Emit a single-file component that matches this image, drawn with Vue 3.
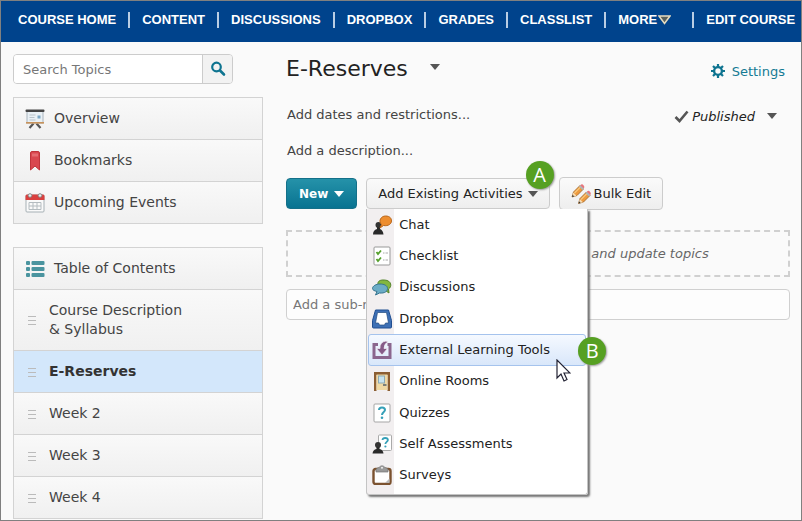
<script setup>
const navItems = ['COURSE HOME', 'CONTENT', 'DISCUSSIONS', 'DROPBOX', 'GRADES', 'CLASSLIST', 'MORE', 'EDIT COURSE']
const modules = ['Course Description & Syllabus', 'E-Reserves', 'Week 2', 'Week 3', 'Week 4']
const activities = ['Chat', 'Checklist', 'Discussions', 'Dropbox', 'External Learning Tools', 'Online Rooms', 'Quizzes', 'Self Assessments', 'Surveys']
</script>

<template>
  <div class="page">
    <nav class="topnav" aria-label="Course">
      <ul>
        <li v-for="item in navItems" :key="item" :class="{ more: item === 'MORE' }">
          <a href="#">{{ item }}<svg v-if="item === 'MORE'" width="13" height="10" viewBox="0 0 13 10"><path d="M1 1h11L6.500 8.500z" fill="#59605c" stroke="#e6dcc0" stroke-width="1.500" /></svg></a>
        </li>
      </ul>
    </nav>

    <div class="body">
      <aside class="sidebar">
        <form class="search" @submit.prevent>
          <input type="text" placeholder="Search Topics" aria-label="Search Topics" />
          <button type="submit" aria-label="Search">
            <svg width="16" height="16" viewBox="0 0 16 16" fill="none" stroke="#0e7490" stroke-linecap="round"><circle cx="6.500" cy="6" r="4.300" stroke-width="2.200" /><path d="M10 9.500l4 4" stroke-width="2.600" /></svg>
          </button>
        </form>

        <ul class="panel">
          <li>
            <a href="#" class="row">
              <svg width="20" height="20" viewBox="0 0 20 20"><path d="M4.500 19l4-4.500M15.500 19l-4-4.500" fill="none" stroke="#555" stroke-width="2.200" /><rect x="2" y="2.500" width="16" height="11.500" fill="#e9f0f5" stroke="#a8b4bd" /><path d="M4.500 6h6M4.500 8.500h5M4.500 11h6" stroke="#b9c3ca" /><rect x="12.500" y="6.500" width="3" height="3" fill="#7ba6c4" /><rect x="1" y="13" width="18" height="1.600" fill="#c8935b" /><rect x="0.500" y="0.500" width="19" height="2.500" rx="1" fill="#444" /></svg>
              Overview
            </a>
          </li>
          <li>
            <a href="#" class="row">
              <svg width="20" height="20" viewBox="0 0 20 20"><path d="M5.500 2q0-1.500 1.500-1.500h6q1.500 0 1.500 1.500v17L10 15l-4.500 4z" fill="#d9474f" stroke="#c0343b" /><path d="M7 2.500h6v3H7z" fill="#ea7c80" opacity=".7" /></svg>
              Bookmarks
            </a>
          </li>
          <li>
            <a href="#" class="row">
              <svg width="20" height="20" viewBox="0 0 20 20"><rect x="1" y="2" width="18" height="17" rx="1" fill="#fafafa" stroke="#a6b0b5" /><path d="M.5 7V3q0-1.500 1.500-1.500h16q1.500 0 1.500 1.500v4z" fill="#d9403f" /><path d="M4 9.500h12v7H4zM8 9.500v7M12 9.500v7M4 13h12" fill="none" stroke="#b5bcc0" /><circle cx="5" cy="2.500" r="1.800" fill="#eee" stroke="#888" /><circle cx="15" cy="2.500" r="1.800" fill="#eee" stroke="#888" /></svg>
              Upcoming Events
            </a>
          </li>
        </ul>

        <ul class="panel toc">
          <li>
            <a href="#" class="row">
              <svg width="20" height="20" viewBox="0 0 20 20" fill="#4a949f"><rect x="1" y="2" width="4" height="4" rx="1" /><rect x="6.500" y="2" width="13" height="4" rx="1" /><rect x="1" y="8" width="4" height="4" rx="1" /><rect x="6.500" y="8" width="13" height="4" rx="1" /><rect x="1" y="14" width="4" height="4" rx="1" /><rect x="6.500" y="14" width="13" height="4" rx="1" /></svg>
              Table of Contents
            </a>
          </li>
          <li v-for="name in modules" :key="name">
            <a href="#" class="row module" :class="{ current: name === 'E-Reserves' }">
              <svg width="8" height="10" viewBox="0 0 8 10"><path d="M0 1.500h8M0 5.500h8M0 9.500h8" stroke="#bbb" /></svg>
              <span>{{ name }}</span>
            </a>
          </li>
        </ul>
      </aside>

      <main class="content">
        <header class="titlebar">
          <h1>E-Reserves</h1>
          <button class="plain" aria-label="Module actions"><i class="caret"></i></button>
          <a href="#" class="settings">
            <svg width="16" height="16" viewBox="0 0 16 16" fill="none" stroke="#0e7490"><circle cx="8" cy="8" r="3.900" stroke-width="2.400" /><path d="M8 1v3M8 12v3M1 8h3M12 8h3M3 3l2 2M11 11l2 2M13 3l-2 2M5 11l-2 2" stroke-width="2.200" /></svg>
            Settings
          </a>
        </header>

        <div class="line">
          <a href="#">Add dates and restrictions...</a>
          <button class="plain status">
            <svg width="15" height="13" viewBox="0 0 15 13"><path d="M1.500 7l4 4L13.500 1.500" fill="none" stroke="#555" stroke-width="2.600" /></svg>
            <em>Published</em>
            <i class="caret"></i>
          </button>
        </div>
        <div class="line"><a href="#">Add a description...</a></div>

        <div class="toolbar">
          <button class="btn primary">New <i class="caret"></i></button>
          <div class="dropdown">
            <button class="btn" aria-haspopup="true" aria-expanded="true">Add Existing Activities <i class="caret"></i></button>
            <span class="badge badge-a">A</span>
            <ul class="menu">
              <li v-for="name in activities" :key="name">
                <a href="#" :class="{ active: name === 'External Learning Tools' }">
                  <svg width="20" height="20" viewBox="0 0 20 20">
                    <g v-if="name === 'Chat'"><circle cx="6.500" cy="10" r="3" fill="#333" /><path d="M5 12h3v2q3 1 3.500 5.500H1Q1 15 5 14z" fill="#292929" /><path d="M8 13l1.500-3.500C6 6 9 1 13.500 1s6 2.500 6 5-3 5.500-8 4.500z" fill="#ed8d2f" stroke="#b8661b" /></g>
                    <g v-else-if="name === 'Checklist'"><rect x="2" y="1" width="16" height="18" rx="1" fill="#fff" stroke="#999" /><path d="M4.500 6l1.500 2L9 4.500M4.500 13l1.500 2 3-3.500" fill="none" stroke="#55a02c" stroke-width="1.800" /><path d="M11 7h1.500M13.500 7H16M11 14h1.500M13.500 14H16" stroke="#aaa" /></g>
                    <g v-else-if="name === 'Discussions'"><path d="M14 14l3 2-.5-4C20 10 20 3.500 12.500 3S5 7 7 10s5 3 7 4z" fill="#83b740" stroke="#538228" /><path d="M5 14.500L3.500 18l4-2c5 .5 8-1.500 8-4.500S12 7 8 7s-7.500 2-7.500 4.500c0 1.500 2 2.500 4.500 3z" fill="#6cacc6" stroke="#37748f" /></g>
                    <g v-else-if="name === 'Dropbox'"><path d="M3.500 1h13l3 10.500V18q0 1-1 1h-17q-1 0-1-1v-6.500z" fill="#3e70b5" stroke="#214f91" /><path d="M5.500 3.500h9L16.500 14h-3l-1 2h-5l-1-2h-3z" fill="#fff" stroke="#234a80" stroke-width=".7" /></g>
                    <g v-else-if="name === 'External Learning Tools'"><path d="M6 4.500H2V17.500h16V4.500H15.500" fill="none" stroke="#8b668e" stroke-width="3" /><path d="M14 1Q7.500 2 8 8.500H4.500L10 15l5.500-6.500H12q0-5 4-6.500z" fill="#865b88" stroke="#f4eff5" stroke-width=".7" /></g>
                    <g v-else-if="name === 'Online Rooms'"><path d="M2 20V1h16v19h-2.500V4h-11v16z" fill="#8b5e32" /><path d="M4.500 3.500h11V19h-11z" fill="#efd9a4" /><rect x="6.500" y="5" width="6" height="7" fill="#c6e3ef" stroke="#8ca9b4" /><path d="M11 14h3.500" stroke="#54606a" stroke-width="1.500" /></g>
                    <g v-else-if="name === 'Quizzes'"><rect x="2" y="1" width="16" height="18" rx="1" fill="#fff" stroke="#a5a5a5" /><path d="M7 7q0-2.500 3-2.500T13 7c0 2-3 2-3 5" fill="none" stroke="#35a0b8" stroke-width="2" /><circle cx="10" cy="14.800" r="1.300" fill="#35a0b8" /></g>
                    <g v-else-if="name === 'Self Assessments'"><rect x="6.500" y="1" width="13" height="15.500" rx="1" fill="#fff" stroke="#aaa" /><path d="M10.500 6q0-2 2.700-2t2.700 2c0 1.800-2.500 2-2.500 4" fill="none" stroke="#35a0b8" stroke-width="1.800" /><circle cx="13.400" cy="12.500" r="1.100" fill="#35a0b8" /><circle cx="6" cy="11" r="3" fill="#333" /><path d="M4.500 13h3v2q3.500.5 4 4.500H.5Q1 15.500 4.500 15z" fill="#292929" /></g>
                    <g v-else><rect x="1.500" y="4" width="17" height="15" rx="2" fill="#fff" stroke="#7b522f" stroke-width="2.400" /><path d="M13 18l4.500-4.500V18z" fill="#b9b9b9" /><path d="M4 7V4.500q1-2 3-2Q10-1 13 2.500q2 0 3 2V7z" fill="#999" stroke="#777" stroke-width=".7" /><circle cx="10" cy="2.800" r="1" fill="#eee" /></g>
                  </svg>
                  <span>{{ name }}</span>
                </a>
              </li>
            </ul>
            <span class="badge badge-b">B</span>
            <svg class="pointer" width="15" height="23" viewBox="0 0 15 23"><path d="M1 1v18l4-4 3 7 3-1.500-3-6.500h6z" fill="#fff" stroke="#223" stroke-width="1.200" /></svg>
          </div>
          <button class="btn bulk">
            <svg width="20" height="20" viewBox="0 0 20 20"><g id="pencil"><path d="M1 13l1.500-5L9 1.500l3.500 3.500L6 11.500z" fill="#ee9a3e" stroke="#9c6224" stroke-width=".8" /><path d="M1 13l1.300-4.500 3.200 3.200z" fill="#f6dcb4" /><path d="M1 13l.6-2.200 1.600 1.600z" fill="#333" /><path d="M3.500 9l6-6" stroke="#f7c77b" stroke-width="1.300" /><path d="M8 2.500L9.500 1l3.500 3.500L11.500 6z" fill="#aeb7ba" /><path d="M9.300 1.200q1.700-1.700 3.200 0t.2 3.200z" fill="#e8767c" /></g><use href="#pencil" x="6.500" y="6.500" /></svg>
            Bulk Edit
          </button>
        </div>

        <p class="dropzone">and update topics</p>
        <input class="submodule" type="text" placeholder="Add a sub-module..." aria-label="Add a sub-module" />
      </main>
    </div>
  </div>
</template>

<style>
body { margin: 0; background: #fafafa; }
</style>

<style scoped>
* { box-sizing: border-box; }
.page {
  height: 100vh;
  overflow: hidden;
  border: 1px solid #808080;
  background: #fafafa;
  color: #444;
  font-family: "DejaVu Sans", Verdana, sans-serif;
  font-size: 13px;
}
ul { list-style: none; margin: 0; padding: 0; }
a { color: inherit; text-decoration: none; }
button, input { font: inherit; color: inherit; margin: 0; }
svg { flex: none; }

.topnav { background: #00438c; color: #fff; height: 41px; padding: 0 5px; font: bold 13px/16px "Liberation Sans", Arial, sans-serif; }
.topnav ul { display: flex; align-items: center; height: 38px; white-space: nowrap; }
.topnav li { padding: 0 12px; }
.topnav li + li { border-left: 2px solid #b9cde3; }
.topnav a { display: flex; align-items: center; gap: 1px; }
.topnav .more { padding-right: 21px; }

.body { display: grid; grid-template-columns: 250px 1fr; gap: 23px; padding: 0 11px 0 12px; }

.search { display: flex; width: 220px; height: 30px; margin: 12px 0 13px; border: 1px solid #ccc; border-radius: 4px; overflow: hidden; }
.search input { flex: 1; min-width: 0; border: 0; padding: 0 9px; background: #fff; }
.search button { width: 30px; border: 0; border-left: 1px solid #ccc; background: #f2f2f2; display: flex; align-items: center; justify-content: center; padding: 0; }
input::placeholder { color: #777; opacity: 1; }

.panel { border: 1px solid #d3d3d3; font-size: 14px; line-height: 19px; }
.panel li + li { border-top: 1px solid #d3d3d3; }
.toc { margin-top: 23px; }
.row { display: flex; align-items: center; gap: 9px; min-height: 41px; padding: 0 11px; background: linear-gradient(#f9f9f9, #f0f0f0); }
.module { gap: 13px; padding: 11px 66px 11px 14px; }
.current { background: #d3e7fb; color: #333; font-weight: bold; }

.titlebar { display: flex; align-items: center; height: 30px; margin-top: 12px; }
h1 { margin: 0; font-size: 22px; font-weight: normal; line-height: 30px; color: #222; }
.plain { border: 0; background: none; padding: 0; display: flex; align-items: center; }
.titlebar .plain { margin-left: 22px; padding-bottom: 4px; }
.caret { width: 0; height: 0; border: 5px solid transparent; border-top: 6px solid #555; border-bottom: 0; }
.settings { display: flex; align-items: center; gap: 6px; margin: 4px 5px 0 auto; color: #147a94; }

.line { display: flex; align-items: center; justify-content: space-between; height: 36px; padding: 0 13px 0 1px; }
.titlebar + .line { margin-top: 12px; }
.status { gap: 3px; color: #222; padding-top: 4px; }
.status .caret { margin-left: 9px; }

.toolbar { display: flex; align-items: center; gap: 9px; height: 33px; margin-top: 9px; }
.btn { display: flex; align-items: center; height: 31px; padding: 0 11px; gap: 5px; border: 1px solid #ccc; border-radius: 4px; background: linear-gradient(#fafafa, #eee); color: #222; white-space: nowrap; }
.primary { border-color: #147089; background: linear-gradient(#2592a9, #087391); color: #fff; font-size: 12px; font-weight: bold; padding: 0 12px; gap: 6px; }
.primary .caret { border-top-color: #fff; }
.bulk { height: 33px; gap: 3px; }
.dropdown { position: relative; }

.menu {
  position: absolute;
  top: 31px;
  left: 0;
  z-index: 2;
  display: grid;
  grid-auto-rows: 1fr;
  width: 222px;
  height: 286px;
  border: 1px solid #c4c4c4;
  border-top: 0;
  border-radius: 0 0 3px 3px;
  padding: 0 1px 3px;
  background: linear-gradient(90deg, #f2eff0 27px, #fff 27px);
  box-shadow: 2px 2px 2px #777;
}
.menu a { display: flex; align-items: center; gap: 7px; height: 100%; padding: 0 3px; border: 1px solid transparent; color: #222; white-space: nowrap; }
.menu .active { border-color: #a5c3ed; border-radius: 3px; background: linear-gradient(#f5f9ff, #d9e7fa); }
.menu span { padding-bottom: 1px; }

.badge { position: absolute; z-index: 3; display: flex; align-items: center; justify-content: center; width: 28px; height: 28px; border-radius: 50%; background: #56a022; color: #fff; font: 20px/28px "Open Sans", sans-serif; box-shadow: 1px 1px 2px #999; }
.badge-a { top: -17px; right: -4px; }
.badge-b { top: 159px; left: 212px; }
.pointer { position: absolute; z-index: 3; top: 181px; left: 190px; }

.dropzone { margin: 20px 0 12px; padding-left: 224px; height: 47px; border: 2px dashed #d0d0d0; font-style: italic; line-height: 43px; text-align: center; color: #666; }
.submodule { display: block; width: 100%; height: 31px; border: 1px solid #d0d0d0; border-radius: 4px; background: #fdfdfd; padding: 0 6px; }
</style>
